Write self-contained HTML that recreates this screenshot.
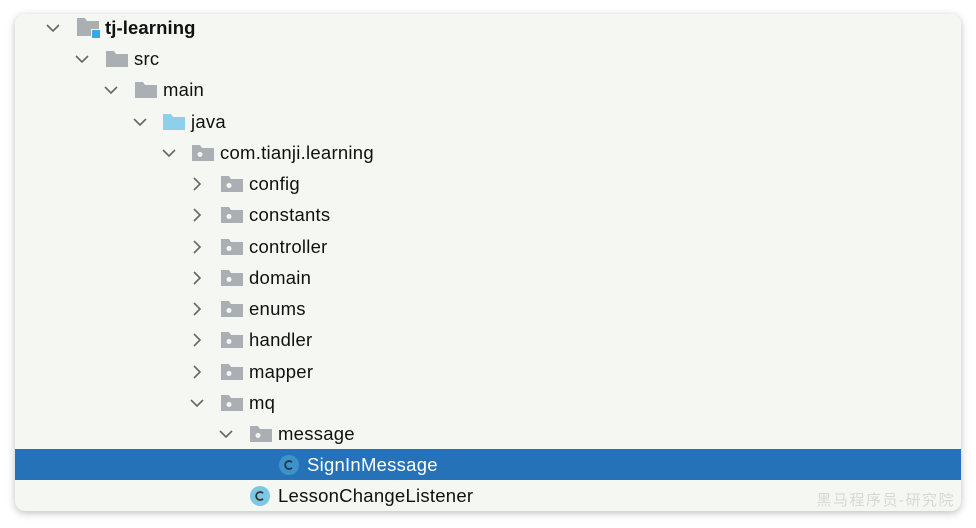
<!DOCTYPE html>
<html><head><meta charset="utf-8"><style>
body{margin:0;width:976px;height:528px;background:#fff;overflow:hidden;font-family:"Liberation Sans","Noto Sans CJK SC",sans-serif}
.p{position:absolute;left:15px;top:14px;width:946px;height:497px;background:#f5f8f2;border-radius:10px;box-shadow:0 2px 8px rgba(0,0,0,.25);overflow:hidden}
.r{position:absolute;left:0;width:946px;height:31px}
.sel{background:#2672b8}
.t{position:absolute;top:5px;font-size:18.5px;letter-spacing:0.25px;color:#111;white-space:nowrap}
.sel .t{color:#fff}
.ch{position:absolute;top:8px;width:16px;height:16px}
.ic{position:absolute;top:7px}
.wm{position:absolute;right:6px;bottom:1px;font-size:15px;color:#d5d9d5;letter-spacing:1.5px}
</style></head><body>
<div class="p">
<svg width="0" height="0" style="position:absolute"><defs>
<symbol id="d" viewBox="0 0 16 16"><path d="M2 5 L8 11 L14 5" fill="none" stroke="#666" stroke-width="1.6"/></symbol>
<symbol id="rt" viewBox="0 0 16 16"><path d="M5 2 L11 8 L5 14" fill="none" stroke="#666" stroke-width="1.6"/></symbol>
<symbol id="f" viewBox="0 0 22 18"><path d="M0 1 H8 L10 4 H22 V17 H0 Z" fill="#a9afb3"/></symbol>
<symbol id="fj" viewBox="0 0 22 18"><path d="M0 1 H8 L10 4 H22 V17 H0 Z" fill="#8cd0eb"/></symbol>
<symbol id="fp" viewBox="0 0 22 18"><path d="M0 1 H8 L10 4 H22 V17 H0 Z" fill="#a9afb3"/><circle cx="8" cy="10.5" r="2.5" fill="#f5f8f2"/></symbol>
<symbol id="c" viewBox="0 0 22 22"><circle cx="11" cy="11" r="10" fill="#7cc8e4"/><path d="M14 8.2 A4 4 0 1 0 14 13.8" fill="none" stroke="#333" stroke-width="1.8"/></symbol>
<symbol id="cs" viewBox="0 0 22 22"><circle cx="11" cy="11" r="10" fill="#3d93c9"/><path d="M14 8.2 A4 4 0 1 0 14 13.8" fill="none" stroke="#1d3550" stroke-width="1.8"/></symbol>
</defs></svg>
<div class="r" style="top:-2px"><svg class="ch" style="left:30px"><use href="#d"/></svg><svg class="ic" style="left:62px;top:5px" width="24" height="22" viewBox="0 0 24 22"><path d="M0 1 H8 L10 4 H22 V19 H0 Z" fill="#a9afb3"/><rect x="14" y="12" width="10" height="10" fill="#f5f8f2"/><rect x="15" y="13" width="8" height="8" fill="#3aa9dd"/></svg><span class="t" style="left:90px;font-weight:bold;letter-spacing:0.1px">tj-learning</span></div>
<div class="r" style="top:29px"><svg class="ch" style="left:59px"><use href="#d"/></svg><svg class="ic" style="left:91px" width="22" height="18"><use href="#f"/></svg><span class="t" style="left:119px">src</span></div>
<div class="r" style="top:60px"><svg class="ch" style="left:88px"><use href="#d"/></svg><svg class="ic" style="left:120px" width="22" height="18"><use href="#f"/></svg><span class="t" style="left:148px">main</span></div>
<div class="r" style="top:92px"><svg class="ch" style="left:117px"><use href="#d"/></svg><svg class="ic" style="left:148px" width="22" height="18"><use href="#fj"/></svg><span class="t" style="left:176px">java</span></div>
<div class="r" style="top:123px"><svg class="ch" style="left:146px"><use href="#d"/></svg><svg class="ic" style="left:177px" width="22" height="18"><use href="#fp"/></svg><span class="t" style="left:205px">com.tianji.learning</span></div>
<div class="r" style="top:154px"><svg class="ch" style="left:174px"><use href="#rt"/></svg><svg class="ic" style="left:206px" width="22" height="18"><use href="#fp"/></svg><span class="t" style="left:234px">config</span></div>
<div class="r" style="top:185px"><svg class="ch" style="left:174px"><use href="#rt"/></svg><svg class="ic" style="left:206px" width="22" height="18"><use href="#fp"/></svg><span class="t" style="left:234px">constants</span></div>
<div class="r" style="top:217px"><svg class="ch" style="left:174px"><use href="#rt"/></svg><svg class="ic" style="left:206px" width="22" height="18"><use href="#fp"/></svg><span class="t" style="left:234px">controller</span></div>
<div class="r" style="top:248px"><svg class="ch" style="left:174px"><use href="#rt"/></svg><svg class="ic" style="left:206px" width="22" height="18"><use href="#fp"/></svg><span class="t" style="left:234px">domain</span></div>
<div class="r" style="top:279px"><svg class="ch" style="left:174px"><use href="#rt"/></svg><svg class="ic" style="left:206px" width="22" height="18"><use href="#fp"/></svg><span class="t" style="left:234px">enums</span></div>
<div class="r" style="top:310px"><svg class="ch" style="left:174px"><use href="#rt"/></svg><svg class="ic" style="left:206px" width="22" height="18"><use href="#fp"/></svg><span class="t" style="left:234px">handler</span></div>
<div class="r" style="top:342px"><svg class="ch" style="left:174px"><use href="#rt"/></svg><svg class="ic" style="left:206px" width="22" height="18"><use href="#fp"/></svg><span class="t" style="left:234px">mapper</span></div>
<div class="r" style="top:373px"><svg class="ch" style="left:174px"><use href="#d"/></svg><svg class="ic" style="left:206px" width="22" height="18"><use href="#fp"/></svg><span class="t" style="left:234px">mq</span></div>
<div class="r" style="top:404px"><svg class="ch" style="left:203px"><use href="#d"/></svg><svg class="ic" style="left:235px" width="22" height="18"><use href="#fp"/></svg><span class="t" style="left:263px">message</span></div>
<div class="r sel" style="top:435px"><svg class="ic" style="left:263px;top:5px" width="22" height="22"><use href="#cs"/></svg><span class="t" style="left:292px">SignInMessage</span></div>
<div class="r" style="top:466px"><svg class="ic" style="left:234px;top:5px" width="22" height="22"><use href="#c"/></svg><span class="t" style="left:263px">LessonChangeListener</span></div>
<div class="wm">黑马程序员-研究院</div>
</div>
</body></html>
